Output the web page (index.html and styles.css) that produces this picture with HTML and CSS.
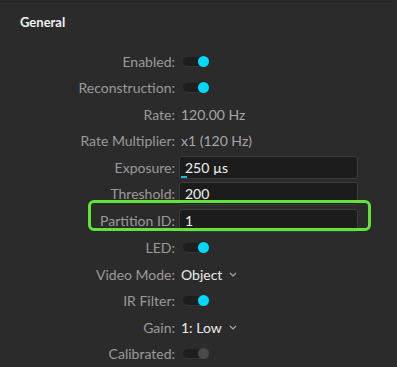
FILE: index.html
```html
<!DOCTYPE html>
<html>
<head>
<meta charset="utf-8">
<link rel="stylesheet" href="styles.css">
</head>
<body>
<div class="panel">
  <div class="topline"></div>
  <div class="title">General</div>
  <div class="rows">
    <div class="row"><div class="label">Enabled:</div><div class="value"><span class="toggle on"><span class="knob"></span></span></div></div>
    <div class="row"><div class="label">Reconstruction:</div><div class="value"><span class="toggle on"><span class="knob"></span></span></div></div>
    <div class="row"><div class="label">Rate:</div><div class="value muted">120.00 Hz</div></div>
    <div class="row"><div class="label">Rate Multiplier:</div><div class="value muted">x1 (120 Hz)</div></div>
    <div class="row"><div class="label">Exposure:</div><div class="value"><div class="input">250 µs<span class="progress"></span></div></div></div>
    <div class="row"><div class="label">Threshold:</div><div class="value"><div class="input">200</div></div></div>
    <div class="row highlight"><div class="label">Partition ID:</div><div class="value"><div class="input">1</div></div></div>
    <div class="row"><div class="label">LED:</div><div class="value"><span class="toggle on"><span class="knob"></span></span></div></div>
    <div class="row"><div class="label">Video Mode:</div><div class="value bright">Object<svg class="chev" width="8" height="5" viewBox="0 0 8 5"><path d="M1 1 L4 4 L7 1" fill="none" stroke="#a8a8a8" stroke-width="1.2"/></svg></div></div>
    <div class="row"><div class="label">IR Filter:</div><div class="value"><span class="toggle on"><span class="knob"></span></span></div></div>
    <div class="row"><div class="label">Gain:</div><div class="value bright">1: Low<svg class="chev" width="8" height="5" viewBox="0 0 8 5"><path d="M1 1 L4 4 L7 1" fill="none" stroke="#a8a8a8" stroke-width="1.2"/></svg></div></div>
    <div class="row"><div class="label">Calibrated:</div><div class="value"><span class="toggle off"><span class="knob"></span></span></div></div>
  </div>
</div>
</body>
</html>
```
FILE: styles.css
```css
html, body {
  margin: 0;
  padding: 0;
  background: #2b2b2b;
}
body {
  width: 397px;
  height: 367px;
  overflow: hidden;
  font-family: Lato, "Open Sans", sans-serif;
  font-size: 14px;
}
.panel {
  position: relative;
}
.topline {
  height: 1px;
  margin-top: 1px;
  width: 393px;
  background: #242424;
}
.title {
  color: #f2f2f2;
  font-weight: bold;
  font-size: 13px;
  line-height: 16px;
  margin-top: 12px;
  padding-left: 20px;
}
.rows {
  margin-top: 18px;
  display: flex;
  flex-direction: column;
}
.row {
  display: flex;
  align-items: center;
  height: 26.5px;
  position: relative;
}
.label {
  width: 175px;
  text-align: right;
  color: #9a9a9a;
  flex: none;
}
.value {
  padding-left: 6px;
  display: flex;
  align-items: center;
  color: #eaeaea;
}
.muted {
  color: #a6a6a6;
}
.bright {
  color: #ececec;
}
.chev {
  margin-left: 7px;
  margin-top: 1px;
}
.input {
  position: relative;
  width: 179px;
  height: 23px;
  margin-left: -2px;
  box-sizing: border-box;
  background: #1c1c1c;
  border: 1px solid #3b3b3b;
  border-radius: 3px;
  padding-left: 5px;
  line-height: 21px;
  color: #f0f0f0;
  font-size: 14px;
}
.progress {
  position: absolute;
  left: 1px;
  bottom: 0;
  width: 6px;
  height: 2px;
  background: #1fb9d6;
}
.toggle {
  position: relative;
  display: block;
  width: 24px;
  height: 9px;
  margin-left: 2px;
  border-radius: 5px;
  background: #1e1e1e;
  box-shadow: 0 1px 0 #343434;
}
.knob {
  position: absolute;
  right: -2px;
  top: -1px;
  width: 11px;
  height: 11px;
  border-radius: 50%;
  background: #00d9ff;
}
.toggle.off .knob {
  background: #4a4a4a;
}
.highlight {
  margin-bottom: 1px;
}
.highlight::after {
  content: "";
  position: absolute;
  left: 88px;
  top: -7px;
  width: 283px;
  height: 31px;
  box-sizing: border-box;
  border: 3px solid #62e33a;
  border-radius: 6px;
  pointer-events: none;
}
```
